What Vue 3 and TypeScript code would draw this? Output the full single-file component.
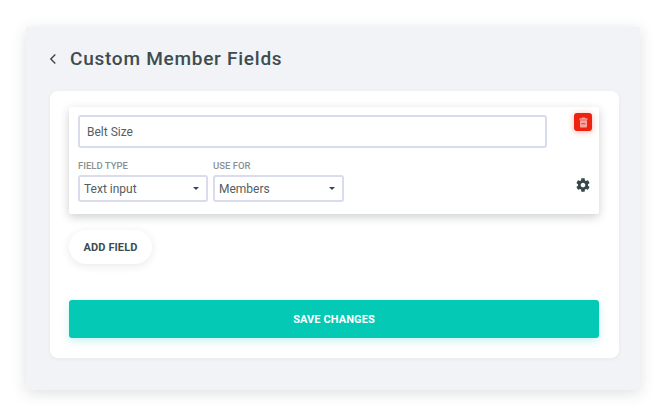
<template>
  <div class="page">
    <div class="panel">
      <header class="panel-header">
        <svg class="back-icon" width="8" height="12" viewBox="0 0 8 12" aria-hidden="true">
          <path d="M6.3 1.4 1.8 6l4.5 4.6" fill="none" stroke="#36474a" stroke-width="1.4" />
        </svg>
        <h1 class="panel-title">Custom Member Fields</h1>
      </header>

      <section class="card">
        <div class="field-card">
          <div class="field-main">
            <div class="text-box name-box">{{ field.name }}</div>
            <div class="select-row">
              <div v-for="item in selects" :key="item.label" class="select-group">
                <label class="select-label">{{ item.label }}</label>
                <div class="text-box select-box">
                  <span>{{ item.value }}</span>
                  <i class="caret"></i>
                </div>
              </div>
            </div>
          </div>
          <div class="field-actions">
            <button class="delete-btn" type="button" aria-label="Delete">
              <svg width="9" height="11" viewBox="0 0 10 12" aria-hidden="true">
                <path d="M3.4 1.2V.5h3.2v.7h2.2c.4 0 .7.3.7.7V3H.5V1.9c0-.4.3-.7.7-.7z" fill="#f9a49c" />
                <path d="M1.1 3.6h7.8v7c0 .5-.4.9-.9.9H2c-.5 0-.9-.4-.9-.9z" fill="#f9a49c" />
                <path d="M2.8 7.4h4.4" stroke="#ee2211" stroke-width="1" />
              </svg>
            </button>
            <svg class="gear" width="16" height="16" viewBox="0 0 24 24" aria-hidden="true">
              <path fill="#36474a" d="M19.43 12.98c.04-.32.07-.64.07-.98s-.03-.66-.07-.98l2.11-1.65c.19-.15.24-.42.12-.64l-2-3.46c-.12-.22-.39-.3-.61-.22l-2.49 1c-.52-.4-1.08-.73-1.69-.98l-.38-2.65C14.46 2.18 14.25 2 14 2h-4c-.25 0-.46.18-.49.42l-.38 2.65c-.61.25-1.17.59-1.69.98l-2.49-1c-.23-.09-.49 0-.61.22l-2 3.46c-.13.22-.07.49.12.64l2.11 1.65c-.04.32-.07.65-.07.98s.03.66.07.98l-2.11 1.65c-.19.15-.24.42-.12.64l2 3.46c.12.22.39.3.61.22l2.49-1c.52.4 1.08.73 1.69.98l.38 2.65c.03.24.24.42.49.42h4c.25 0 .46-.18.49-.42l.38-2.65c.61-.25 1.17-.59 1.69-.98l2.49 1c.23.09.49 0 .61-.22l2-3.46c.12-.22.07-.49-.12-.64l-2.11-1.65zM12 15.5c-1.93 0-3.5-1.57-3.5-3.5s1.57-3.5 3.5-3.5 3.5 1.57 3.5 3.5-1.57 3.5-3.5 3.5z" />
            </svg>
          </div>
        </div>

        <button class="add-btn" type="button">ADD FIELD</button>
        <button class="save-btn" type="button">SAVE CHANGES</button>
      </section>
    </div>
  </div>
</template>

<script setup lang="ts">
interface SelectItem {
  label: string;
  value: string;
}

const field = { name: 'Belt Size' };

const selects: SelectItem[] = [
  { label: 'FIELD TYPE', value: 'Text input' },
  { label: 'USE FOR', value: 'Members' },
];
</script>

<style>
html,
body {
  margin: 0;
  background: #ffffff;
}
</style>

<style scoped>
.page {
  box-sizing: border-box;
  width: 670px;
  height: 419px;
  padding: 27px 30px 29px 26px;
  overflow: hidden;
  font-family: Roboto, "Liberation Sans", sans-serif;
}

.panel {
  box-sizing: border-box;
  height: 363px;
  padding: 0 21px 0 24px;
  background: #f2f3f7;
  box-shadow: 0 3px 14px rgba(40, 45, 60, 0.15);
}

.panel-header {
  display: flex;
  align-items: center;
  height: 62px;
  gap: 13px;
}

.back-icon {
  flex: none;
  margin-top: 1px;
  margin-left: -1px;
}

.panel-title {
  margin: 0;
  font-size: 19px;
  font-weight: 500;
  letter-spacing: 0.75px;
  color: #3c4c4f;
}

.card {
  box-sizing: border-box;
  height: 267px;
  margin-top: 2px;
  padding: 16px 20px 0 19px;
  border-radius: 8px;
  background: #ffffff;
  box-shadow: 0 1px 4px rgba(40, 45, 60, 0.05);
}

.field-card {
  box-sizing: border-box;
  display: flex;
  height: 107px;
  padding: 8px 7px 0 9px;
  border-radius: 2px;
  background: #ffffff;
  box-shadow: 0 3px 10px rgba(30, 35, 45, 0.22);
}

.field-main {
  width: 469px;
}

.text-box {
  box-sizing: border-box;
  border: 2px solid #d9dcec;
  border-radius: 3px;
  background: #ffffff;
  color: #545e60;
  font-size: 12px;
}

.name-box {
  display: flex;
  align-items: center;
  height: 33px;
  padding-left: 7px;
}

.select-row {
  display: flex;
  gap: 5px;
  margin-top: 11px;
}

.select-group {
  display: flex;
  flex-direction: column;
}

.select-label {
  height: 16px;
  font-size: 9.5px;
  font-weight: 500;
  line-height: 13px;
  color: #8a9193;
}

.select-box {
  display: flex;
  align-items: center;
  justify-content: space-between;
  width: 130px;
  height: 27px;
  padding: 0 7px 0 4px;
}

.select-group:last-child .select-box {
  width: 131px;
}

.caret {
  width: 0;
  height: 0;
  border-left: 3.5px solid transparent;
  border-right: 3.5px solid transparent;
  border-top: 3.5px solid #36474a;
}

.field-actions {
  display: flex;
  flex: 1;
  flex-direction: column;
  align-items: flex-end;
}

.delete-btn {
  display: flex;
  align-items: center;
  justify-content: center;
  width: 18px;
  height: 18px;
  margin-top: -2px;
  padding: 0;
  border: 0;
  border-radius: 3px;
  background: #ee2211;
  box-shadow: 0 1px 6px rgba(238, 34, 17, 0.35);
}

.gear {
  margin-top: 46px;
  margin-right: 1px;
}

.add-btn {
  display: block;
  width: 83px;
  height: 34px;
  margin-top: 16px;
  padding: 0;
  border: 0;
  border-radius: 17px;
  background: #ffffff;
  box-shadow: 0 2px 8px rgba(30, 35, 45, 0.1);
  color: #3c4c4f;
  font-family: inherit;
  font-size: 11px;
  font-weight: 700;
  letter-spacing: 0.1px;
}

.save-btn {
  display: block;
  width: 530px;
  height: 38px;
  margin-top: 36px;
  padding: 0;
  border: 0;
  border-radius: 3px;
  background: #04cab5;
  box-shadow: 0 3px 8px rgba(4, 202, 181, 0.22);
  color: #ffffff;
  font-family: inherit;
  font-size: 11px;
  font-weight: 700;
  letter-spacing: 0.1px;
}
</style>
